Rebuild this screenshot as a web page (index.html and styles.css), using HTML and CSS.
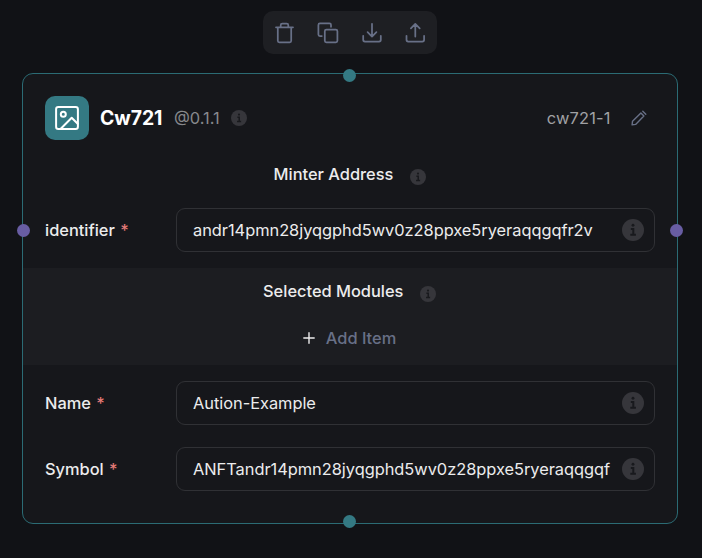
FILE: index.html
```html
<!DOCTYPE html>
<html lang="en">
<head>
<meta charset="utf-8">
<title>Cw721</title>
<link rel="stylesheet" href="styles.css">
</head>
<body>
<svg class="defs" width="0" height="0">
  <symbol id="info" viewBox="0 0 22 22">
    <circle cx="11" cy="11" r="11" class="info-disc"/>
    <circle cx="11" cy="6.3" r="1.45" class="info-dot"/>
    <path d="M8.8 9.9h2.5v5.7M8.3 15.8h5.6" class="info-stem"/>
  </symbol>
</svg>
<nav class="toolbar">
  <svg class="tool" viewBox="0 0 22 22"><path d="M2 5.3h17M6.7 5V3.2c0-1 .6-1.6 1.6-1.6h4.4c1 0 1.6.6 1.6 1.6V5M3.8 5.6v13.2c0 .9.6 1.5 1.5 1.5h10.4c.9 0 1.5-.6 1.5-1.5V5.6"/></svg>
  <svg class="tool" viewBox="0 0 22 22"><path d="M4.8 14H2.9c-.9 0-1.5-.6-1.5-1.5V2.9c0-.9.6-1.5 1.5-1.5h9.6c.9 0 1.5.6 1.5 1.5v1.9"/><rect x="7.8" y="7.6" width="12.6" height="12.8" rx="1.6"/></svg>
  <svg class="tool" viewBox="0 0 22 22"><path d="M11 1.8v12.7M6.6 10.2l4.4 4.4 4.4-4.4M2.2 13.8v4c0 1 .7 1.7 1.7 1.7h14.2c1 0 1.7-.7 1.7-1.7v-4"/></svg>
  <svg class="tool" viewBox="0 0 22 22"><path d="M11.3 14.6V1.9M6.9 6.3l4.4-4.4 4.4 4.4M2.5 13.8v4c0 1 .7 1.7 1.7 1.7h14.2c1 0 1.7-.7 1.7-1.7v-4"/></svg>
</nav>
<main class="card">
  <i class="port port-top"></i><i class="port port-bottom"></i>
  <i class="port port-left"></i><i class="port port-right"></i>
  <header class="head">
    <span class="badge"><svg viewBox="0 0 24 24"><rect x="1.1" y="1.1" width="21.8" height="21.8" rx="2.2"/><circle cx="8.3" cy="8.3" r="2.5"/><path d="M6 22.5L16.7 11.8l6 6"/></svg></span>
    <h1 class="title">Cw721</h1>
    <span class="version">@0.1.1</span>
    <svg class="info-sm"><use href="#info"/></svg>
    <span class="name">cw721-1</span>
    <svg class="pencil" viewBox="0 0 16 16"><path d="M1.1 14.8l.4-3.5 8.4-8.2 3 3-8.3 8.3zM11.8 1.3l3 3"/></svg>
  </header>
  <div class="heading"><h2>Minter Address</h2><svg class="info-sm"><use href="#info"/></svg></div>
  <div class="row">
    <label>identifier <b>*</b></label>
    <div class="field"><span class="value">andr14pmn28jyqgphd5wv0z28ppxe5ryeraqqgqfr2v</span><svg class="info-lg"><use href="#info"/></svg></div>
  </div>
  <section class="modules">
    <div class="heading"><h2>Selected Modules</h2><svg class="info-sm"><use href="#info"/></svg></div>
    <div class="add"><svg class="plus" viewBox="0 0 12 12"><path d="M6 .8v10.4M.8 6h10.4"/></svg><span>Add Item</span></div>
  </section>
  <div class="row">
    <label>Name <b>*</b></label>
    <div class="field"><span class="value">Aution-Example</span><svg class="info-lg"><use href="#info"/></svg></div>
  </div>
  <div class="row">
    <label>Symbol <b>*</b></label>
    <div class="field"><span class="value">ANFTandr14pmn28jyqgphd5wv0z28ppxe5ryeraqqgqf</span><svg class="info-lg"><use href="#info"/></svg></div>
  </div>
</main>
</body>
</html>
```
FILE: styles.css
```css
* { box-sizing: border-box; }
body {
  margin: 0;
  height: 558px;
  padding: 11px 24px 0 22px;
  overflow: hidden;
  background: #111216;
  color: #ececed;
  font: 16.4px/22px Inter, "Liberation Sans", sans-serif;
}
svg { display: block; flex: none; fill: none; stroke-linecap: round; stroke-linejoin: round; }
.defs { position: absolute; }
.info-disc { fill: #36363b; }
.info-dot { fill: #18191d; }
.info-stem { stroke: #18191d; stroke-width: 2; stroke-linecap: butt; stroke-linejoin: miter; }

.toolbar {
  display: flex;
  align-items: center;
  justify-content: space-between;
  width: 174px;
  height: 43px;
  margin: 0 0 19px 241px;
  padding: 0 10.5px;
  border-radius: 10px;
  background: #1e1f23;
}
.tool { width: 22px; height: 22px; stroke: #687087; stroke-width: 1.75; }

.card {
  position: relative;
  width: 656px;
  height: 451px;
  border: 1px solid #2b6b74;
  border-radius: 11px;
  background: #16171b;
}
.port { position: absolute; width: 13px; height: 13px; border-radius: 50%; background: #347983; }
.port-top { left: 320px; top: -5px; }
.port-bottom { left: 320px; bottom: -5px; }
.port-left { left: -6.5px; top: 149.5px; background: #685da3; }
.port-right { right: -6px; top: 149.5px; background: #685da3; }

.head { display: flex; align-items: center; height: 44px; margin: 22px 30px 0 22px; }
.badge { display: grid; place-items: center; width: 44px; height: 44px; border-radius: 10px; background: #347983; }
.badge svg { width: 24px; height: 24px; stroke: #fff; stroke-width: 2; }
.title { margin: 0 11.5px 0 11px; color: #fff; font-size: 19.4px; font-weight: 700; letter-spacing: -0.05px; }
.version { margin-right: 11px; color: #87888c; }
.name { margin: 0 20.5px 0 auto; color: #a0a1a4; letter-spacing: 0.15px; }
.pencil { width: 16px; height: 16px; stroke: #687087; stroke-width: 1.4; }
.info-sm { width: 16px; height: 16px; }
.info-lg { width: 22px; height: 22px; }

.heading { display: flex; justify-content: center; gap: 17px; height: 22px; margin-top: 23px; }
.heading h2 { margin: 0; font-size: 16.4px; font-weight: 500; }
.heading svg { margin-top: 6px; }

.row { display: flex; align-items: center; height: 44px; margin: 22px 22px 0; }
.heading + .row { margin-top: 23px; }
.row label { width: 131px; font-weight: 500; }
.row b { margin-left: 1px; color: #e57b77; font-weight: 500; }
.field {
  display: flex;
  align-items: center;
  flex: 1;
  height: 44px;
  padding: 0 10px 0 16px;
  border: 1px solid #303135;
  border-radius: 9px;
}
.value { flex: 1; overflow: hidden; white-space: nowrap; letter-spacing: -0.03px; }

.modules { display: flow-root; height: 97px; margin: 16px 0 -6px; background: #1c1d21; }
.modules .heading { margin: 12px 1px 0 0; gap: 16.5px; }
.add { display: flex; align-items: center; justify-content: center; gap: 11px; height: 22px; margin: 25px 1px 0 0; color: #687087; font-weight: 500; }
.plus { width: 12px; height: 12px; stroke: #ececed; stroke-width: 1.4; }
```
